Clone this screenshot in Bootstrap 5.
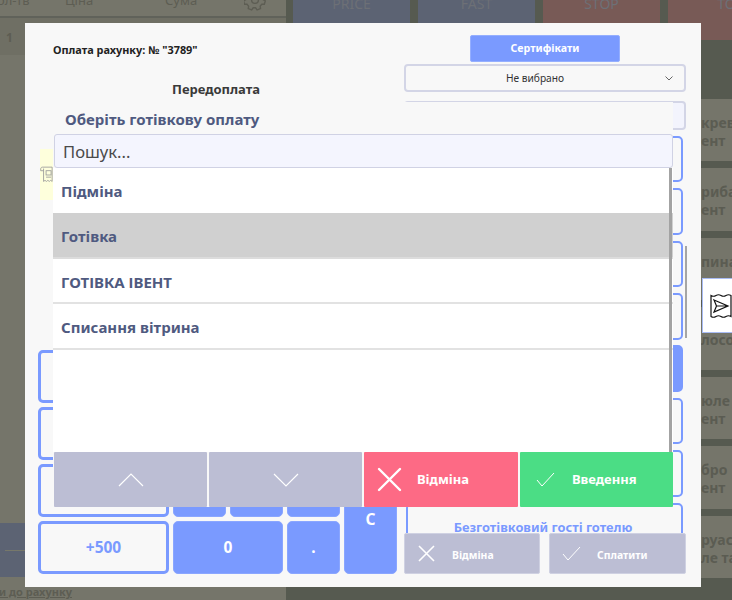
<!DOCTYPE html>
<html lang="uk">
<head>
<meta charset="utf-8">
<title>Оплата рахунку</title>
<link rel="stylesheet" href="https://cdn.jsdelivr.net/npm/bootstrap@5.3.0/dist/css/bootstrap.min.css">
<style>
html,body{width:732px;height:600px;overflow:hidden;margin:0}
body{font-family:"Noto Sans","Liberation Sans",sans-serif;background:#565a50;position:relative}
/* background app */
.app{width:732px;height:600px;display:flex;gap:7px}
.app-left{width:286px;height:600px;background:#75756a;display:flex;flex-direction:column;color:#5d5d53}
.app-head{height:18px;flex:none;border-bottom:2px solid #60625a;position:relative;overflow:hidden;font-size:13px;background:#75756a}
.app-head span{position:absolute;top:-9px}
.app-row{height:37px;flex:none;background:#6f6f64;font-size:12px;font-weight:700;padding:11px 0 0 6px}
.app-space{flex:1}
.app-bar{height:54px;flex:none;background:#5c6373;display:flex;align-items:center;padding-left:5px}
.app-bar i{display:block;height:1px;width:100%;background:#77786a}
.app-foot{height:23px;flex:none;font-size:11px;font-weight:700;padding:7px 0 0 0;margin-left:-8px;white-space:nowrap;overflow:hidden;text-decoration:underline}
.app-right{flex:1;display:flex;flex-direction:column;overflow:hidden}
.top-keys{display:flex;gap:8px;height:40px;flex:none;margin-bottom:59px;font-size:14px;color:#6d7076}
.top-key{width:117px;flex:none;text-align:center;line-height:8px;height:40px;overflow:hidden}
.tk-blue{background:#5c6373}
.tk-red{background:#785a56}
.tile-col{display:flex;flex-direction:column;gap:7.2px;margin-left:376px}
.tile{height:62.3px;flex:none;background:#75756a;color:#5b5c52;font-size:14px;font-weight:700;line-height:18px;padding:15px 0 0 32px;white-space:nowrap}
.tile-low{padding-top:24px}
/* payment window */
.pay{position:absolute;left:25px;top:23px;width:676px;height:564px;background:#f8f8f8;display:flex;gap:7px;padding:0 15px 13px 13px}
.pay-l{width:359px;flex:none;display:flex;flex-direction:column}
.pay-r{flex:1;display:flex;flex-direction:column;min-width:0}
.pay-title{font-size:10.9px;font-weight:700;color:#222;margin:19px 0 0 15px;line-height:15px}
.pay-sub{font-size:13px;font-weight:700;color:#3a3a3a;margin:23px 0 0 134px;line-height:18px}
.numpad{margin-top:auto;display:grid;grid-template-columns:131px 53px 53px 53px 53px;grid-auto-rows:53px;gap:4px 4px}
.numpad>*{border-radius:5px;display:flex;align-items:center;justify-content:center;font-size:15.5px;font-weight:700}
.k-out{border:3px solid #7a9aff;background:#f8f8f8;color:#7a9aff}
.k-fill{background:#7a9aff;color:#fff;border:1px solid #8aa6ff}
.k-zero{grid-column:span 2}
.k-c{grid-row:3 / span 2;grid-column:5;align-items:flex-start;padding-top:43px}
.cert{width:150px;height:27px;background:#7a9aff;border:1px solid #95afff;border-radius:2px;color:#fff;font-size:10.6px;font-weight:700;margin:12px 0 2px 66px;padding:0;line-height:23px}
.sel{height:28px;border:2px solid #d3d5e6;border-radius:4px;background:#f8f8f8;font-size:10.2px;color:#333;display:flex;align-items:center;justify-content:center;position:relative;padding:1px 20px 0 0;width:282px}
.sel svg{position:absolute;right:11px;top:10px}
.fld{height:29px;width:282px;border:2px solid #d3d5e6;border-radius:4px;background:#f3f4fd;margin-top:9px}
.pay-list{height:398px;overflow:hidden;margin:6px 0 0 2px;width:277px;display:grid;grid-auto-rows:46.5px;row-gap:5.9px}
.pl-i{border:2px solid #7a9aff;border-radius:5px;background:#f8f8f8;color:#7a9aff;font-size:12.8px;font-weight:700;display:flex;align-items:center;justify-content:center;padding-top:3px;padding-right:3px}
.pl-on{background:#7a9aff}
.pay-act{display:flex;justify-content:space-between;width:282px;height:41px;flex:none}
.grey-btn{width:136px;background:#bcbed4;border:1px solid #cfd1e2;border-radius:2px;color:#fff;font-size:10.4px;font-weight:700;display:flex;align-items:center;padding:0 0 0 12px}
.grey-btn span{margin-left:16px;padding-top:4px}
.grey-r{width:137px}
.grey-r span{margin-left:16px}
.yellow{position:absolute;left:15px;top:126px;width:15px;height:51px;background:#feffdc;display:flex;align-items:center;overflow:hidden}
/* picker */
.picker{position:absolute;left:53px;top:102px;width:620px;height:405px;background:#f8f8f8;display:flex;flex-direction:column}
.pk-title{font-size:15px;font-weight:700;color:#4f5a80;line-height:20px;padding:7px 0 0 12px;height:32px;flex:none}
.pk-input{height:34px;flex:none;margin-left:1px;border:1px solid #d0d2e4;border-radius:3px;background:#f4f5fe;color:#4a4a4a;font-size:16.6px;line-height:33px;padding:0 8px}
.pk-list{flex:1;background:#fff;position:relative;min-height:0}
.pk-i{height:45.4px;border-bottom:2px solid #e2e2e2;font-size:15px;font-weight:700;color:#4f5a80;padding:3px 0 0 8px;display:flex;align-items:center}
.pk-sel{background:#d0d0d0;border-bottom-color:#dcdcdc}
.pk-plain{border-bottom-color:transparent}
.pk-bar{position:absolute;right:1px;top:0;bottom:0;width:3px;background:#a3a3a3}
.pk-btns{height:55px;flex:none;display:flex;gap:2px;margin-left:1px}
.pk-b{width:153px;flex:none;border:0;border-radius:1px;display:flex;align-items:center;color:#fff;font-size:13px;font-weight:700;padding:0}
.pk-n{background:#bcbed4;justify-content:center}
.pk-x{background:#fd6a85;padding-left:13px;width:154px}
.pk-ok{background:#4bdd85;padding-left:16px}
.pk-x span{margin-left:15px;padding-top:1px}
.pk-ok span{margin-left:17px;padding-top:1px}
/* floating */
.thin{position:absolute;left:685px;top:246px;width:2px;height:92px;background:#a5a5a5}
.sidetab{position:absolute;left:702px;top:278px;width:30px;height:55px;background:#fff;border:1px solid #a9bcf5;border-right:0;display:flex;align-items:center;padding-left:7px}
</style>
</head>
<body>
<div class="app">
  <div class="app-left">
    <div class="app-head">
      <span style="left:-3px">ол-тв</span><span style="left:65px">Ціна</span><span style="left:165px">Сума</span>
      <svg style="position:absolute;left:244px;top:-6px" width="22" height="18" viewBox="0 0 22 18" fill="none" stroke="#5d5d53" stroke-width="1.4"><circle cx="11" cy="6" r="3.4"/><path d="M9 -4h4l.6 2.4 2.3 1 2.2-1.2 2.4 3-1.6 2 .4 2.5 2 1.2-1 3.4-2.5-.1-1.6 1.9.3 2.5-3.4 1.2-1.5-2h-2.4l-1.5 2-3.4-1.2.3-2.5-1.6-1.9-2.5.1-1-3.4 2-1.2.4-2.5-1.6-2 2.4-3 2.2 1.2 2.3-1z"/></svg>
    </div>
    <div class="app-row">1</div>
    <div class="app-space"></div>
    <div class="app-bar"><i></i></div>
    <div class="app-foot">ки до рахунку</div>
  </div>
  <div class="app-right">
    <div class="top-keys">
      <div class="top-key tk-blue">PRICE</div>
      <div class="top-key tk-blue">FAST</div>
      <div class="top-key tk-red">STOP</div>
      <div class="top-key tk-red">TO</div>
    </div>
    <div class="tile-col">
      <div class="tile">крев<br>ент</div>
      <div class="tile">риба<br>ент</div>
      <div class="tile">пина</div>
      <div class="tile tile-low">лосо</div>
      <div class="tile">юле<br>ент</div>
      <div class="tile">бро<br>ент</div>
      <div class="tile">руаса<br>ле та</div>
    </div>
  </div>
</div>

<div class="pay">
  <div class="pay-l">
    <div class="pay-title">Оплата рахунку: № "3789"</div>
    <div class="pay-sub">Передоплата</div>
    <div class="numpad">
      <div class="k-out"></div><div class="k-fill"></div><div class="k-fill"></div><div class="k-fill"></div><div class="k-fill"></div>
      <div class="k-out"></div><div class="k-fill"></div><div class="k-fill"></div><div class="k-fill"></div><div class="k-fill"></div>
      <div class="k-out"></div><div class="k-fill"></div><div class="k-fill"></div><div class="k-fill"></div><div class="k-fill k-c">C</div>
      <div class="k-out">+500</div><div class="k-fill k-zero">0</div><div class="k-fill">.</div>
    </div>
  </div>
  <div class="pay-r">
    <button type="button" class="btn cert">Сертифікати</button>
    <div class="sel">Не вибрано<svg width="8" height="5" viewBox="0 0 8 5" fill="none" stroke="#666" stroke-width="1"><path d="M.5.5L4 4 7.5.5"/></svg></div>
    <div class="fld"></div>
    <div class="pay-list">
      <div class="pl-i"></div><div class="pl-i"></div><div class="pl-i"></div><div class="pl-i"></div>
      <div class="pl-i pl-on"></div><div class="pl-i"></div><div class="pl-i"></div>
      <div class="pl-i">Безготівковий гості готелю</div>
    </div>
    <div class="pay-act">
      <div class="grey-btn"><svg width="19" height="19" viewBox="0 0 19 19" stroke="#fff" stroke-width="1.6" fill="none"><path d="M2 2l15 15M17 2L2 17"/></svg><span>Відміна</span></div>
      <div class="grey-btn grey-r"><svg width="19" height="15" viewBox="0 0 19 15" stroke="#fff" stroke-width="1" fill="none"><path d="M1 8l5 6L18 1"/></svg><span>Сплатити</span></div>
    </div>
  </div>
  <div class="yellow"><svg width="21" height="24" viewBox="0 0 21 24" fill="none" stroke="#9a9a9a" stroke-width="1.2"><path d="M1 6V3.5C1 2 2 1 3.5 1H17M5 6H1M5 3v18l2-1.5 2 1.5 2-1.5 2 1.5 2-1.5 2 1.5V1"/><rect x="8.5" y="6" width="7" height="6"/><path d="M8.5 15h7"/></svg></div>
</div>

<div class="thin"></div>

<div class="picker">
  <div class="pk-title">Оберіть готівкову оплату</div>
  <div class="pk-input">Пошук...</div>
  <div class="pk-list">
    <div class="pk-i pk-plain">Підміна</div>
    <div class="pk-i pk-sel">Готівка</div>
    <div class="pk-i">ГОТІВКА ІВЕНТ</div>
    <div class="pk-i">Списання вітрина</div>
    <div class="pk-bar"></div>
  </div>
  <div class="pk-btns">
    <button type="button" class="btn pk-b pk-n"><svg width="26" height="14" viewBox="0 0 26 14" stroke="#fff" stroke-width="1.2" fill="none"><path d="M1 13L13 1l12 12"/></svg></button>
    <button type="button" class="btn pk-b pk-n"><svg width="26" height="14" viewBox="0 0 26 14" stroke="#fff" stroke-width="1.2" fill="none"><path d="M1 1l12 12L25 1"/></svg></button>
    <button type="button" class="btn pk-b pk-x"><svg width="25" height="25" viewBox="0 0 25 25" stroke="#fff" stroke-width="2.4" fill="none" stroke-linecap="round"><path d="M2 2l21 21M23 2L2 23"/></svg><span>Відміна</span></button>
    <button type="button" class="btn pk-b pk-ok"><svg width="19" height="15" viewBox="0 0 19 15" stroke="#fff" stroke-width="1" fill="none"><path d="M1 8l5 6L18 1"/></svg><span>Введення</span></button>
  </div>
</div>

<div class="sidetab"><svg width="22" height="24" viewBox="0 0 22 24" fill="none" stroke="#111" stroke-width="1.2"><path d="M1 1.5q2.5 1.5 5 0t5 0 5 0 5 0v21q-2.5-1.5-5 0t-5 0-5 0-5 0z"/><path d="M4 6l14 6-14 6 2.5-6zM6.5 12H18"/></svg></div>
</body>
</html>
